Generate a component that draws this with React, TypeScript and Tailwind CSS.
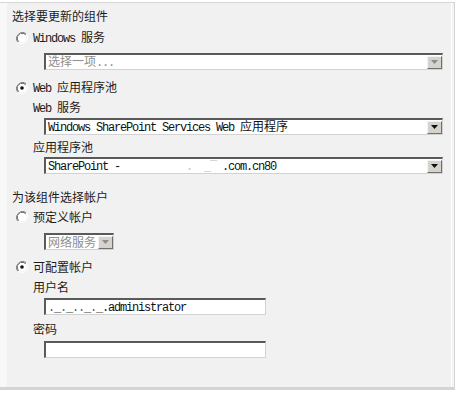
import React from 'react';

const Mono = ({ children }: { children: React.ReactNode }) => (
  <span className="font-['Liberation_Mono'] tracking-[-1.2px]">{children}</span>
);

const Radio = ({ checked }: { checked?: boolean }) => (
  <svg width="12" height="12" viewBox="0 0 12 12" className="shrink-0">
    <path d="M10.2 1.8 A6 6 0 0 0 1.8 10.2" fill="none" stroke="#808080" strokeWidth="1" />
    <path d="M9.5 2.5 A5 5 0 0 0 2.5 9.5" fill="none" stroke="#404040" strokeWidth="1" />
    <path d="M1.8 10.2 A6 6 0 0 0 10.2 1.8" fill="none" stroke="#ffffff" strokeWidth="1" />
    <circle cx="6" cy="6" r="4.3" fill="#ffffff" />
    {checked && <circle cx="6" cy="6" r="1.8" fill="#111111" />}
  </svg>
);

const RadioRow = ({ checked, children }: { checked?: boolean; children: React.ReactNode }) => (
  <div className="flex items-center gap-[5px] pl-[9px] h-[16px] leading-[16px] text-[12px] text-[#1c1c1c]">
    <Radio checked={checked} />
    <span>{children}</span>
  </div>
);

const Arrow = ({ disabled }: { disabled?: boolean }) => (
  <div className="w-[15px] h-[13px] bg-[#d6d3cc] border-t border-l border-[#f4f4f4] border-b border-r border-b-[#6f6f6f] border-r-[#6f6f6f] flex items-center justify-center shrink-0">
    <svg width="7" height="4" viewBox="0 0 7 4">
      <path d="M0 0 H7 L3.5 4 Z" fill={disabled ? '#8c8c8c' : '#111111'} />
    </svg>
  </div>
);

const Field = ({
  width,
  children,
  select,
  disabled,
}: {
  width: string;
  children?: React.ReactNode;
  select?: boolean;
  disabled?: boolean;
}) => (
  <div
    className={`${width} ml-[37px] h-[17px] flex items-center bg-white border-t-2 border-l-2 border-[#5a5a5a] border-b border-r border-b-[#d2d2d2] border-r-[#d2d2d2] ${
      disabled ? 'text-[#8e8e8e]' : 'text-[#111111]'
    }`}
  >
    <div className="flex-1 pl-[2px] text-[12px] leading-[14px] whitespace-pre">{children}</div>
    {select && <Arrow disabled={disabled} />}
  </div>
);

const Label = ({ children }: { children: React.ReactNode }) => (
  <div className="pl-[26px] h-[16px] leading-[16px] text-[12px] text-[#1c1c1c]">{children}</div>
);

const Heading = ({ children }: { children: React.ReactNode }) => (
  <div className="pl-[5px] h-[16px] leading-[16px] text-[12px] text-[#1c1c1c]">{children}</div>
);

export default function App() {
  return (
    <div className="w-[461px] h-[394px] bg-white font-['Noto_Sans_CJK_SC','Noto_Sans',sans-serif]">
      <div className="h-[2px]" />
      <div className="w-[455px] border-t border-[#d6d6d6]">
        <div className="flex h-[384px]">
          <div className="w-[7px] bg-[#f8f8f8]" />
          <div className="flex-1 bg-[#f1f1f1] flex flex-col pt-[5px]">
            <Heading>选择要更新的组件</Heading>
            <div className="mt-[6px]">
              <RadioRow>
                <Mono>Windows </Mono>服务
              </RadioRow>
            </div>
            <div className="mt-[7px]">
              <Field width="w-[399px]" select disabled>
                选择一项<Mono>...</Mono>
              </Field>
            </div>
            <div className="mt-[10px]">
              <RadioRow checked>
                <Mono>Web </Mono>应用程序池
              </RadioRow>
            </div>
            <div className="mt-[3px]">
              <Label>
                <Mono>Web </Mono>服务
              </Label>
            </div>
            <div className="mt-[3px]">
              <Field width="w-[399px]" select>
                <Mono>Windows SharePoint Services Web </Mono>应用程序
              </Field>
            </div>
            <div className="mt-[4px]">
              <Label>应用程序池</Label>
            </div>
            <div className="mt-[2px]">
              <Field width="w-[399px]" select>
                <Mono>SharePoint -</Mono>
                <span className="text-[#c4c4c4]">
                  <Mono>           .  _‾ </Mono>
                </span>
                <Mono>.com.cn80</Mono>
              </Field>
            </div>
            <div className="mt-[15px]">
              <Heading>为该组件选择帐户</Heading>
            </div>
            <div className="mt-[4px]">
              <RadioRow>预定义帐户</RadioRow>
            </div>
            <div className="mt-[8px]">
              <Field width="w-[70px]" select disabled>
                网络服务
              </Field>
            </div>
            <div className="mt-[9px]">
              <RadioRow checked>可配置帐户</RadioRow>
            </div>
            <div className="mt-[4px]">
              <Label>用户名</Label>
            </div>
            <div className="mt-[3px]">
              <Field width="w-[222px]">
                <span className="text-[#5a5a5a]">
                  <Mono>._._.._._</Mono>
                </span>
                <Mono>.administrator</Mono>
              </Field>
            </div>
            <div className="mt-[6px]">
              <Label>密码</Label>
            </div>
            <div className="mt-[4px]">
              <Field width="w-[222px]" />
            </div>
          </div>
          <div className="w-[1px] bg-white" />
          <div className="w-[2px] bg-[#f3f3f3]" />
          <div className="w-[1px] bg-[#d4d4d4]" />
        </div>
        <div className="h-[3px] bg-[#d4d4d4]" />
      </div>
    </div>
  );
}
